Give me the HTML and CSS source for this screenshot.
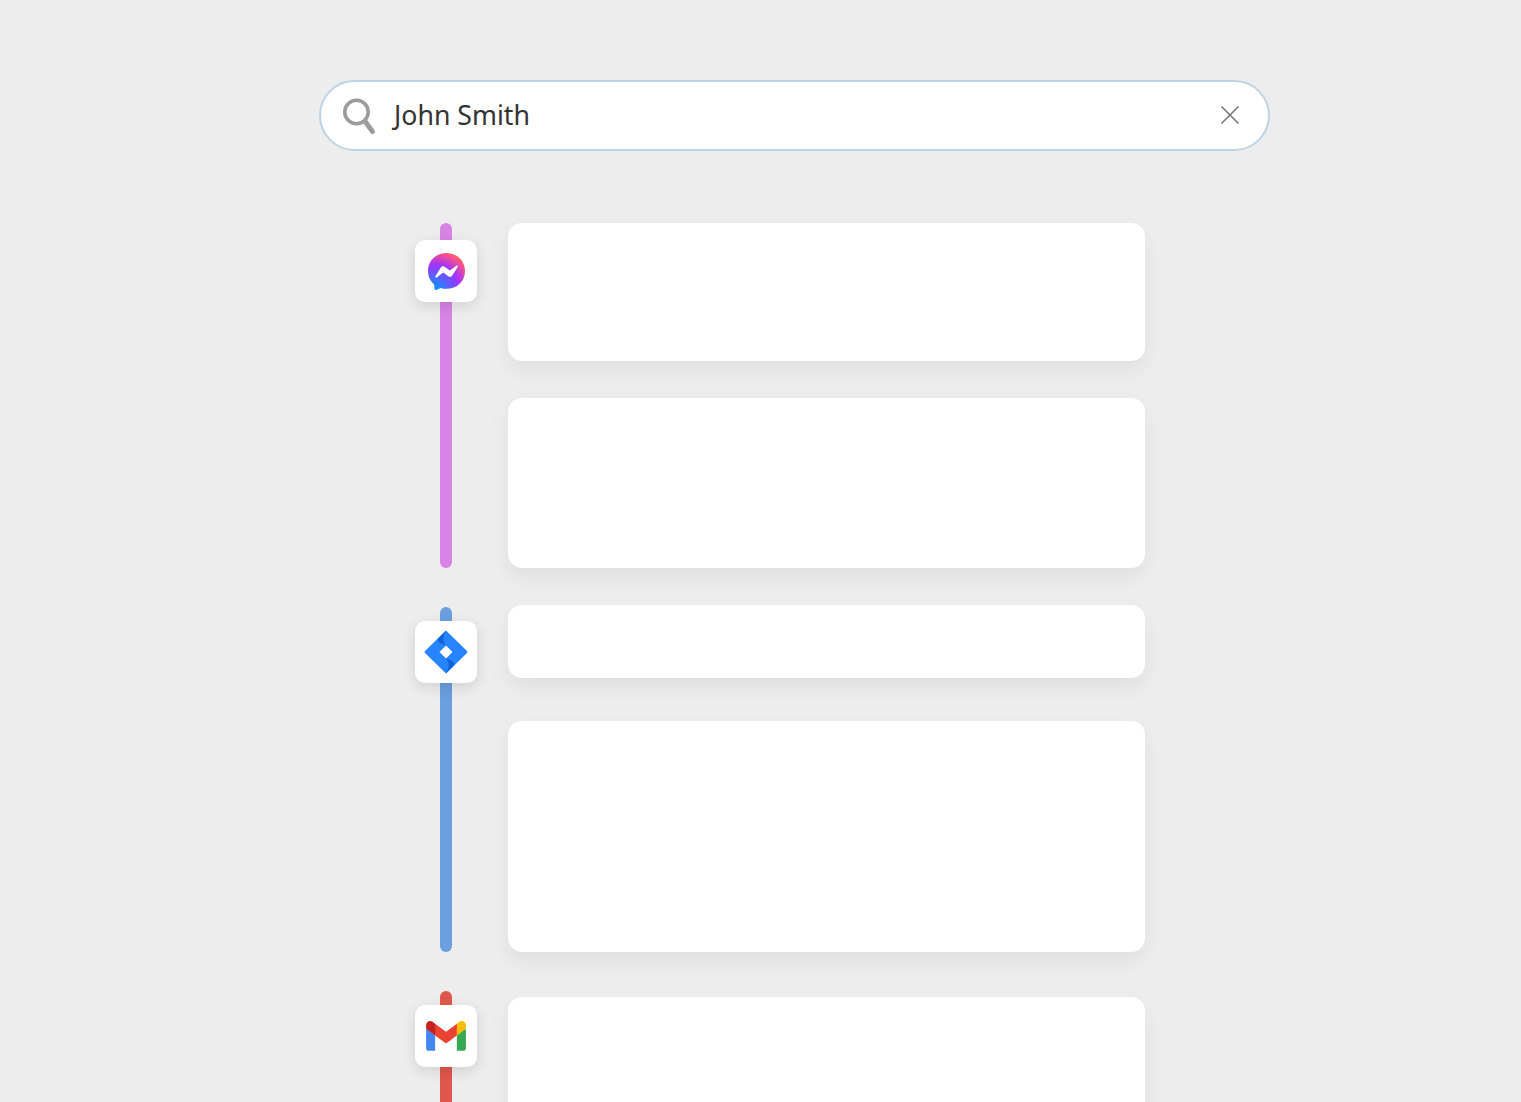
FILE: index.html
```html
<!DOCTYPE html>
<html lang="en">
<head>
<meta charset="utf-8">
<title>Search</title>
<link rel="stylesheet" href="styles.css">
</head>
<body>
<main class="page">
  <div class="search">
    <svg class="search-icon" width="34" height="38" viewBox="0 0 34 38" aria-hidden="true">
      <circle cx="14.5" cy="14" r="11.7" fill="none" stroke="#9c9c9c" stroke-width="3.6"/>
      <path d="M23.5 24 L30.5 33.5" fill="none" stroke="#9c9c9c" stroke-width="5" stroke-linecap="round"/>
    </svg>
    <div class="search-text">John Smith</div>
    <svg class="clear-icon" width="20" height="20" viewBox="0 0 20 20" aria-hidden="true">
      <path d="M1.5 1.5 L18.5 18.5 M18.5 1.5 L1.5 18.5" fill="none" stroke="#767676" stroke-width="1.6"/>
    </svg>
  </div>

  <div class="timeline">
    <div class="rails">
      <div class="rail rail-purple">
        <div class="badge badge-first">
          <svg width="37" height="37" viewBox="0 0 36 36" aria-hidden="true">
            <defs>
              <radialGradient id="msg" cx="0.19" cy="0.99" r="1.09">
                <stop offset="0" stop-color="#0099ff"/>
                <stop offset="0.61" stop-color="#a033ff"/>
                <stop offset="0.93" stop-color="#ff5280"/>
                <stop offset="1" stop-color="#ff7061"/>
              </radialGradient>
            </defs>
            <path fill="url(#msg)" d="M18 0C7.9 0 0 7.4 0 17.4c0 5.2 2.1 9.8 5.6 12.9.3.3.5.7.5 1.1l.1 3.2c0 1 1.1 1.7 2 1.3l3.6-1.6c.3-.1.6-.2.9-.1 1.6.5 3.4.7 5.3.7 10.1 0 18-7.4 18-17.4S28.1 0 18 0z"/>
            <path fill="#fff" d="M7.2 22.6l5.3-8.4c.8-1.3 2.6-1.7 3.9-.7l4.2 3.1c.4.3.9.3 1.3 0l5.7-4.3c.8-.6 1.8.3 1.3 1.2l-5.3 8.4c-.8 1.3-2.6 1.7-3.9.7l-4.2-3.1c-.4-.3-.9-.3-1.3 0l-5.7 4.3c-.8.6-1.8-.3-1.3-1.2z"/>
          </svg>
        </div>
      </div>
      <div class="rail rail-blue">
        <div class="badge">
          <svg width="44" height="44" viewBox="0 0 44 44" aria-hidden="true">
            <path fill="#2684ff" fill-rule="evenodd" d="M22 0.5 L43 21 Q44 22 43 23 L22 43.5 L1 23 Q0 22 1 21 Z M22 15.5 L15.5 22 L22 28.5 L28.5 22 Z"/>
            <path fill="#0f63d8" d="M22 0.5 L13.5 9 Q13.5 13 22 15.5 Q16.5 10 22 0.5 Z"/>
            <path fill="#0f63d8" d="M22 43.5 L30.5 35 Q30.5 31 22 28.5 Q27.5 34 22 43.5 Z"/>
          </svg>
        </div>
      </div>
      <div class="rail rail-red">
        <div class="badge">
          <svg width="40" height="30" viewBox="0 0 256 193" aria-hidden="true">
            <path fill="#4285F4" d="M58.182 192.05V93.14L27.507 65.077 0 49.504v125.091c0 9.658 7.825 17.455 17.455 17.455h40.727Z"/>
            <path fill="#34A853" d="M197.818 192.05h40.727c9.659 0 17.455-7.826 17.455-17.455V49.505l-31.156 17.837-27.026 25.798v98.91Z"/>
            <path fill="#EA4335" d="m58.182 93.14-4.174-38.647 4.174-36.989L128 69.868l69.818-52.364 4.669 34.992-4.669 40.644L128 145.504z"/>
            <path fill="#FBBC04" d="M197.818 17.504V93.14L256 49.504V26.231c0-21.585-24.64-33.89-41.89-20.945l-16.292 12.218Z"/>
            <path fill="#C5221F" d="m0 49.504 26.759 20.07L58.182 93.14V17.504L41.89 5.286C24.61-7.66 0 4.646 0 26.23v23.273Z"/>
          </svg>
        </div>
      </div>
    </div>
    <div class="cards">
      <div class="card card-a"></div>
      <div class="card card-b"></div>
      <div class="card card-c"></div>
      <div class="card card-d"></div>
      <div class="card card-e"></div>
    </div>
  </div>
</main>
</body>
</html>
```
FILE: styles.css
```css
html, body {
  margin: 0;
  height: 100%;
  overflow: hidden;
  background: #ededed;
}

.page {
  padding: 80px 0 0 319px;
  font-family: "Noto Sans", sans-serif;
}

.search {
  box-sizing: border-box;
  width: 951px;
  height: 71px;
  display: flex;
  align-items: center;
  padding: 0 28px 0 21px;
  background: #ffffff;
  border: 2px solid #bdd2e3;
  border-radius: 36px;
}

.search-icon {
  flex: none;
  margin-top: 3px;
}

.search-text {
  flex: 1;
  margin: -3px 0 0 18px;
  font-size: 26.7px;
  color: #333333;
}

.clear-icon {
  flex: none;
  margin-top: -2px;
}

.timeline {
  display: grid;
  grid-template-columns: 62px 637px;
  column-gap: 31px;
  margin: 72px 0 0 96px;
}

.rails {
  display: flex;
  flex-direction: column;
  align-items: center;
  row-gap: 39px;
}

.rail {
  position: relative;
  width: 12px;
  height: 345px;
  border-radius: 6px;
}

.rail-purple { background: #d884e6; }
.rail-blue { background: #6b9fe0; }
.rail-red { background: #e0584d; }

.badge {
  position: absolute;
  top: 14px;
  left: -25px;
  width: 62px;
  height: 62px;
  display: flex;
  align-items: center;
  justify-content: center;
  background: #ffffff;
  border-radius: 10px;
  box-shadow: 0 4px 14px rgba(0, 0, 0, 0.12);
}

.badge-first { top: 17px; }

.cards {
  display: flex;
  flex-direction: column;
}

.card {
  background: #ffffff;
  border-radius: 14px;
  box-shadow: 0 10px 22px rgba(0, 0, 0, 0.06);
}

.card-a { height: 138px; }
.card-b { height: 170px; margin-top: 37px; }
.card-c { height: 73px; margin-top: 37px; }
.card-d { height: 231px; margin-top: 43px; }
.card-e { height: 200px; margin-top: 45px; }
```
